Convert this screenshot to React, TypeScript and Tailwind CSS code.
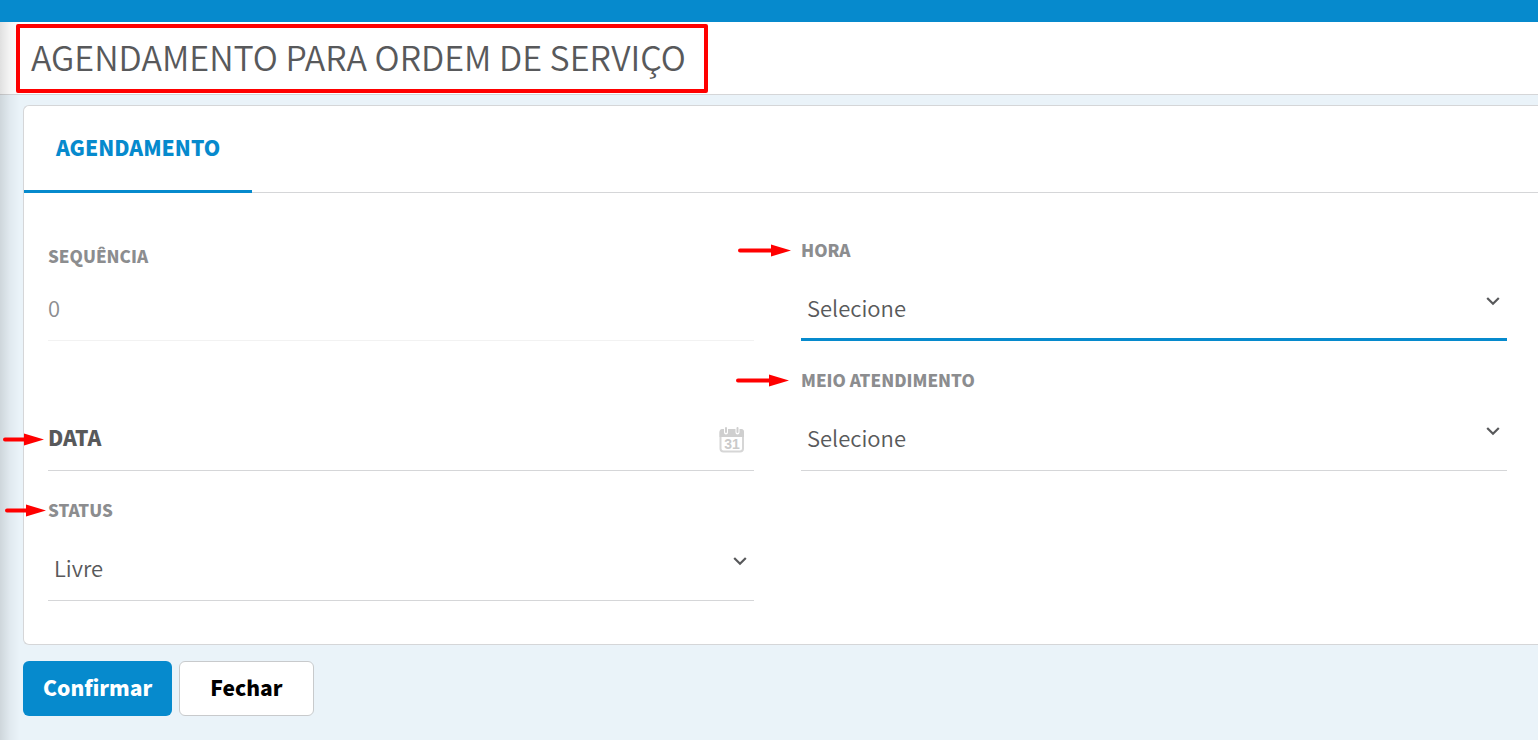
import type { ReactNode } from "react"

type ArrowProps = {
  length: number,
  className: string,
}

const Arrow = ({ length, className }: ArrowProps) => (
  <svg
    aria-hidden="true"
    width={length}
    height="14"
    viewBox={`0 0 ${length} 14`}
    className={`pointer-events-none absolute top-1/2 z-10 -translate-y-1/2 ${className}`}
  >
    <path d={`M2 7.5H${length - 15}`} stroke="#ff0000" strokeWidth="4" strokeLinecap="round" />
    <path d={`M${length - 20} 1.5L${length} 7.5L${length - 20} 13.5Z`} fill="#ff0000" />
  </svg>
)

const Chevron = () => (
  <svg
    aria-hidden="true"
    width="14"
    height="10"
    viewBox="0 0 14 10"
    fill="none"
    className="pointer-events-none absolute right-[7px] top-[19px]"
  >
    <path d="M1.2 2L7 7.8L12.8 2" stroke="#58595b" strokeWidth="2.2" />
  </svg>
)

const CalendarIcon = () => (
  <svg aria-hidden="true" width="26" height="26" viewBox="0 0 26 26">
    <rect x="1.5" y="3" width="22.5" height="21.5" rx="3" fill="#fff" stroke="#d6d6d6" strokeWidth="2" />
    <path d="M0.5 10V5a3 3 0 0 1 3-3h18.5a3 3 0 0 1 3 3v5Z" fill="#cfcfcf" />
    <path d="M7 0v5.5M18.5 0v5.5" stroke="#fff" strokeWidth="4" strokeLinecap="round" />
    <path d="M7 1v4M18.5 1v4" stroke="#cfcfcf" strokeWidth="2" strokeLinecap="round" />
    <text x="13" y="21.5" textAnchor="middle" fontSize="14" fontWeight="700" fontFamily="Liberation Sans, sans-serif" fill="#cacaca">31</text>
  </svg>
)

type SelectFieldProps = {
  id: string,
  label: string,
  options: string[],
  active?: boolean,
  children?: ReactNode,
}

const SelectField = ({ id, label, options, active, children }: SelectFieldProps) => {
  const line = active ? 'border-b-3 border-[#068acd]' : 'border-b pb-0.5 border-[#d5d6d8]'
  return (
    <div className="flex h-[130px] flex-col justify-end">
      <div className="relative mb-[15px] flex">
        {children}
        <label htmlFor={id} className="text-[17px] leading-6 font-black text-[#8c8d8f]">{label}</label>
      </div>
      <div className="relative">
        <select
          id={id}
          className={`block h-16 w-full appearance-none bg-transparent pl-1.5 text-[22px] font-[350] text-[#58595b] outline-none ${line}`}
        >
          {options.map((option) => <option key={option}>{option}</option>)}
        </select>
        <Chevron />
      </div>
    </div>
  )
}

export default function App() {
  return (
    <div className="relative min-h-screen bg-[#eaf3f9] font-['Noto_Sans_CJK_JP',sans-serif]">
      <div className="h-[22px] bg-[#068acd]" />
      <div className="pointer-events-none absolute top-[22px] bottom-0 left-0 w-5 bg-linear-to-r from-black/12 via-black/4 to-transparent" />
      <header className="flex border-b border-[#d5d6d8] bg-white pt-0.5 pb-px pl-4">
        <h1 className="rounded-xs border-4 border-[#ff0000] pr-[18px] pb-1 pl-[11px] text-[34px] leading-[57px] font-[350] text-[#58595b]">
          AGENDAMENTO PARA ORDEM DE SERVIÇO
        </h1>
      </header>
      <form className="pt-2.5 pl-[23px]" onSubmit={(e) => e.preventDefault()}>
        <section className="rounded-l-md border border-r-0 border-[#d5d6d8] bg-white">
          <div className="flex h-[87px] border-b border-[#d5d6d8]">
            <button type="button" className="-mb-px border-b-3 border-[#068acd] px-8 text-[21px] font-black text-[#068acd]">
              AGENDAMENTO
            </button>
          </div>
          <div className="grid grid-cols-2 gap-x-[47px] pt-[18px] pr-[31px] pb-[43px] pl-6">
            <div className="flex h-[130px] flex-col justify-end">
              <label htmlFor="sequencia" className="mb-[9px] text-[17px] leading-6 font-black text-[#8c8d8f]">SEQUÊNCIA</label>
              <input
                id="sequencia"
                defaultValue="0"
                readOnly
                className="h-16 w-full border-b border-[#f2f2f2] bg-transparent pb-1 text-[22px] font-[350] text-[#8c8d8f] outline-none"
              />
            </div>
            <SelectField id="hora" label="HORA" options={['Selecione']} active>
              <Arrow length={53} className="right-full mr-2.5" />
            </SelectField>
            <div className="flex h-[130px] flex-col justify-end">
              <div className="relative flex h-16 items-center border-b border-[#d5d6d8] pb-0.5">
                <Arrow length={41} className="right-full mr-1" />
                <label htmlFor="data" className="text-[21px] font-black text-[#58595b]">DATA</label>
                <input id="data" className="h-full min-w-0 flex-1 bg-transparent px-2 text-[22px] text-[#58595b] outline-none" />
                <button type="button" aria-label="Abrir calendário" className="mt-1 mr-[9px]">
                  <CalendarIcon />
                </button>
              </div>
            </div>
            <SelectField id="meio" label="MEIO ATENDIMENTO" options={['Selecione']}>
              <Arrow length={53} className="right-full mr-3" />
            </SelectField>
            <SelectField id="status" label="STATUS" options={['Livre']}>
              <Arrow length={41} className="right-full mr-0.5" />
            </SelectField>
          </div>
        </section>
        <div className="flex gap-[7px] py-4">
          <button type="submit" className="h-[55px] rounded-md bg-[#068acd] px-5 pb-0.5 text-[21px] font-black text-white">
            Confirmar
          </button>
          <button type="button" className="h-[55px] rounded-md border border-[#c8cacc] bg-white px-[30px] pb-0.5 text-[21px] font-black text-black">
            Fechar
          </button>
        </div>
      </form>
    </div>
  )
}
